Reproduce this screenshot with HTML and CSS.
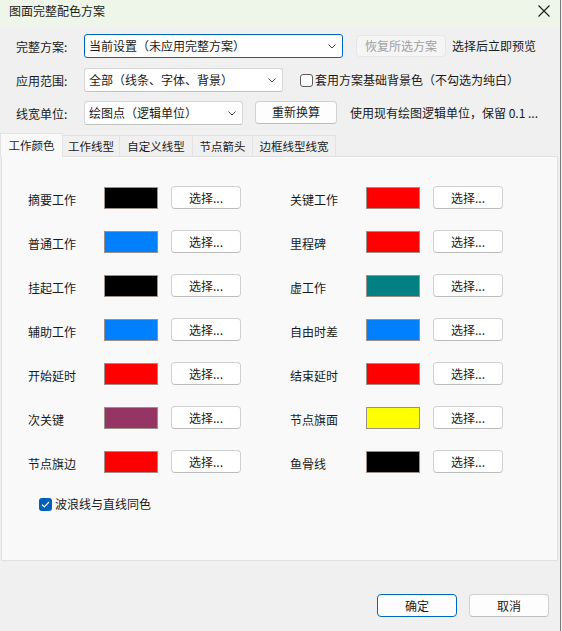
FILE: index.html
```html
<!DOCTYPE html>
<html lang="zh-CN">
<head>
<meta charset="utf-8">
<title>图面完整配色方案</title>
<link rel="stylesheet" href="styles.css">
</head>
<body>
<div class="dialog">
  <div class="titlebar">
    <span class="title">图面完整配色方案</span>
    <svg class="close" width="12" height="12" viewBox="0 0 12 12"><path d="M0.5 0.5 L11.5 11.5 M11.5 0.5 L0.5 11.5" stroke="#1a1a1a" stroke-width="1.1" fill="none"/></svg>
  </div>

  <div class="form">
    <div class="row row1">
      <span class="label">完整方案:</span>
      <div class="combo combo-focus combo-w1"><span>当前设置（未应用完整方案）</span><svg class="chev" width="8" height="5" viewBox="0 0 8 5"><path d="M0.5 0.5 L4 4 L7.5 0.5" stroke="#444" stroke-width="1" fill="none"/></svg></div>
      <div class="btn btn-disabled btn-restore">恢复所选方案</div>
      <span class="note">选择后立即预览</span>
    </div>
    <div class="row row2">
      <span class="label">应用范围:</span>
      <div class="combo combo-w2"><span>全部（线条、字体、背景）</span><svg class="chev" width="8" height="5" viewBox="0 0 8 5"><path d="M0.5 0.5 L4 4 L7.5 0.5" stroke="#444" stroke-width="1" fill="none"/></svg></div>
      <span class="check-empty"></span>
      <span class="note note-check">套用方案基础背景色（不勾选为纯白）</span>
    </div>
    <div class="row row3">
      <span class="label">线宽单位:</span>
      <div class="combo combo-w3"><span>绘图点（逻辑单位）</span><svg class="chev" width="8" height="5" viewBox="0 0 8 5"><path d="M0.5 0.5 L4 4 L7.5 0.5" stroke="#444" stroke-width="1" fill="none"/></svg></div>
      <div class="btn btn-recalc">重新换算</div>
      <span class="note note-recalc">使用现有绘图逻辑单位，保留 0.1 ...</span>
    </div>
  </div>

  <div class="tabs">
    <div class="tab tab-active t1">工作颜色</div>
    <div class="tab t2">工作线型</div>
    <div class="tab t3">自定义线型</div>
    <div class="tab t4">节点箭头</div>
    <div class="tab t5">边框线型线宽</div>
  </div>

  <div class="panel">
    <div class="grid">
      <div class="item"><span class="ilabel">摘要工作</span><span class="swatch sw-black"></span><div class="btn pick">选择...</div></div>
      <div class="item"><span class="ilabel">关键工作</span><span class="swatch sw-red"></span><div class="btn pick">选择...</div></div>
      <div class="item"><span class="ilabel">普通工作</span><span class="swatch sw-blue"></span><div class="btn pick">选择...</div></div>
      <div class="item"><span class="ilabel">里程碑</span><span class="swatch sw-red"></span><div class="btn pick">选择...</div></div>
      <div class="item"><span class="ilabel">挂起工作</span><span class="swatch sw-black"></span><div class="btn pick">选择...</div></div>
      <div class="item"><span class="ilabel">虚工作</span><span class="swatch sw-teal"></span><div class="btn pick">选择...</div></div>
      <div class="item"><span class="ilabel">辅助工作</span><span class="swatch sw-blue"></span><div class="btn pick">选择...</div></div>
      <div class="item"><span class="ilabel">自由时差</span><span class="swatch sw-blue"></span><div class="btn pick">选择...</div></div>
      <div class="item"><span class="ilabel">开始延时</span><span class="swatch sw-red"></span><div class="btn pick">选择...</div></div>
      <div class="item"><span class="ilabel">结束延时</span><span class="swatch sw-red"></span><div class="btn pick">选择...</div></div>
      <div class="item"><span class="ilabel">次关键</span><span class="swatch sw-plum"></span><div class="btn pick">选择...</div></div>
      <div class="item"><span class="ilabel">节点旗面</span><span class="swatch sw-yellow"></span><div class="btn pick">选择...</div></div>
      <div class="item"><span class="ilabel">节点旗边</span><span class="swatch sw-red"></span><div class="btn pick">选择...</div></div>
      <div class="item"><span class="ilabel">鱼骨线</span><span class="swatch sw-black"></span><div class="btn pick">选择...</div></div>
    </div>
    <div class="wave">
      <span class="check-on"><svg width="9" height="7" viewBox="0 0 9 7"><path d="M1 3.6 L3.3 5.8 L8 1" stroke="#fff" stroke-width="1.2" fill="none"/></svg></span>
      <span class="wave-text">波浪线与直线同色</span>
    </div>
  </div>

  <div class="footer">
    <div class="btn btn-ok">确定</div>
    <div class="btn btn-cancel">取消</div>
  </div>
</div>
</body>
</html>
```

FILE: styles.css
```css
html, body {
  margin: 0;
  padding: 0;
  background: #f0f0f0;
}
body {
  font-family: "Noto Sans CJK SC", "Noto Sans", "Liberation Sans", sans-serif;
  font-size: 12px;
  color: #1a1a1a;
}
.dialog {
  width: 560px;
  height: 631px;
  background: #f0f0f0;
  border-right: 1px solid #7c7c7c;
  display: flex;
  flex-direction: column;
  box-sizing: content-box;
}
.titlebar {
  height: 25px;
  background: #eef6e9;
  display: flex;
  align-items: center;
  justify-content: space-between;
  padding: 0 10px 0 9px;
  box-sizing: border-box;
}
.title {
  font-size: 12px;
  line-height: 14px;
  margin-top: -4px;
}
.close {
  margin-top: -4px;
}
.form {
  display: flex;
  flex-direction: column;
  padding-left: 16px;
}
.row {
  display: flex;
  align-items: center;
  height: 24px;
}
.row1 { margin-top: 9px; }
.row2 { margin-top: 10px; }
.row3 { margin-top: 9px; }
.label {
  width: 68px;
  line-height: 14px;
  padding-top: 1px;
}
.combo {
  height: 24px;
  box-sizing: border-box;
  background: #fff;
  border: 1px solid #d6d6d6;
  border-bottom-color: #c2c2c2;
  border-radius: 3px;
  display: flex;
  align-items: center;
  justify-content: space-between;
  padding: 0 6px 0 4px;
  line-height: 14px;
}
.combo-focus {
  border: 1px solid #0067c0;
}
.combo-w1 { width: 259px; }
.combo-w2 { width: 199px; }
.combo-w3 { width: 159px; }
.chev { flex: none; }
.btn {
  box-sizing: border-box;
  height: 23px;
  background: #fdfdfd;
  border: 1px solid #d0d0d0;
  border-bottom-color: #bcbcbc;
  border-radius: 4px;
  display: flex;
  align-items: center;
  justify-content: center;
  line-height: 14px;
}
.btn-disabled {
  background: #f5f5f5;
  border-color: #e6e6e6;
  color: #a0a0a0;
}
.btn-restore {
  width: 90px;
  height: 22px;
  margin-left: 13px;
}
.note {
  margin-left: 6px;
  line-height: 14px;
}
.check-empty {
  width: 13px;
  height: 13px;
  box-sizing: border-box;
  border: 1px solid #5d5d5d;
  border-radius: 3px;
  background: #fbfbfb;
  margin-left: 17px;
}
.note-check { margin-left: 2px; }
.btn-recalc {
  width: 82px;
  margin-left: 12px;
  margin-top: -2px;
}
.note-recalc { margin-left: 13px; }

.tabs {
  display: flex;
  align-items: flex-end;
  margin-top: 8px;
  height: 23px;
  position: relative;
  z-index: 1;
}
.tab {
  box-sizing: border-box;
  height: 21px;
  border: 1px solid #e3e3e3;
  border-bottom: none;
  border-left: none;
  background: #f0f0f0;
  font-size: 11.5px;
  line-height: 13px;
  display: flex;
  align-items: center;
  justify-content: center;
}
.tab-active {
  height: 24px;
  background: #f9f9f9;
  border-left: 1px solid #e3e3e3;
  margin-bottom: -1px;
}
.t1 { width: 63px; }
.t2 { width: 57px; }
.t3 { width: 73px; }
.t4 { width: 60px; }
.t5 { width: 83px; }

.panel {
  margin-left: 1px;
  width: 557px;
  height: 405px;
  box-sizing: border-box;
  background: #f9f9f9;
  border: 1px solid #e0e0e0;
  padding: 29px 0 0 26px;
  display: flex;
  flex-direction: column;
}
.grid {
  display: grid;
  grid-template-columns: 213px 213px;
  column-gap: 49px;
  row-gap: 21px;
}
.item {
  display: flex;
  align-items: center;
  height: 23px;
}
.ilabel {
  width: 76px;
  line-height: 14px;
  padding-top: 4px;
}
.swatch {
  width: 54px;
  height: 22px;
  box-sizing: border-box;
  border: 1px solid #9c9088;
  margin-right: 13px;
}
.sw-black { background: #000000; }
.sw-red { background: #ff0000; }
.sw-blue { background: #0080ff; }
.sw-teal { background: #008080; }
.sw-plum { background: #953564; }
.sw-yellow { background: #ffff00; }
.pick {
  width: 70px;
  background: #fff;
}
.wave {
  display: flex;
  align-items: center;
  margin-top: 24px;
  margin-left: 11px;
}
.check-on {
  width: 13px;
  height: 13px;
  border-radius: 3px;
  background: #005fb8;
  display: flex;
  align-items: center;
  justify-content: center;
}
.wave-text {
  margin-left: 3px;
  line-height: 14px;
}
.footer {
  display: flex;
  justify-content: flex-end;
  padding-right: 11px;
  margin-top: 33px;
  gap: 12px;
}
.btn-ok {
  width: 80px;
  border: 1px solid #0067c0;
  background: #fdfdfd;
}
.btn-cancel {
  width: 80px;
}
```
